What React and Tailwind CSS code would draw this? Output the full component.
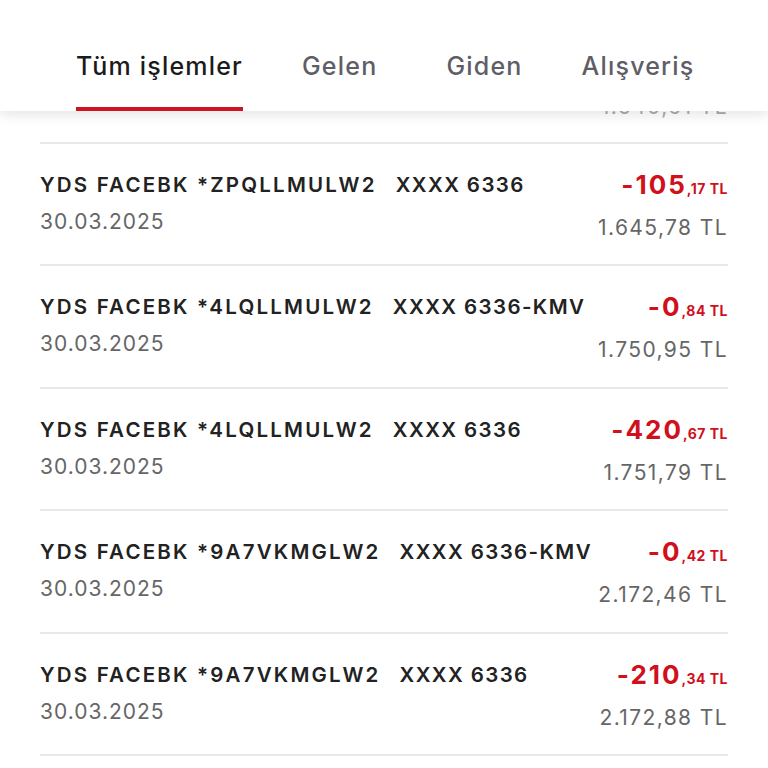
// App.jsx — Hesap hareketleri listesi

const TABS = ['Tüm işlemler', 'Gelen', 'Giden', 'Alışveriş']

const ROWS = [
  { ref: '*ZPQLLMULW2', card: 'XXXX 6336',     whole: '-105', cents: ',17', balance: '1.645,78 TL' },
  { ref: '*4LQLLMULW2', card: 'XXXX 6336-KMV', whole: '-0',   cents: ',84', balance: '1.750,95 TL' },
  { ref: '*4LQLLMULW2', card: 'XXXX 6336',     whole: '-420', cents: ',67', balance: '1.751,79 TL' },
  { ref: '*9A7VKMGLW2', card: 'XXXX 6336-KMV', whole: '-0',   cents: ',42', balance: '2.172,46 TL' },
  { ref: '*9A7VKMGLW2', card: 'XXXX 6336',     whole: '-210', cents: ',34', balance: '2.172,88 TL' },
]

function Row({ r }) {
  return (
    <div className="h-[122.4px] flex items-start justify-between border-t-2 border-[#e8e8e8] pt-[26px]">
      <div className="flex flex-col">
        <div className="flex gap-[19px] text-[20.5px] leading-[30px] font-semibold text-[#222]">
          <span className="tracking-[2.2px]">YDS FACEBK {r.ref}</span>
          <span className="tracking-[1.4px]">{r.card}</span>
        </div>
        <div className="text-[21px] leading-[30px] mt-[7px] tracking-[1px] text-[#666]">30.03.2025</div>
      </div>
      <div className="flex flex-col items-end">
        <div className="leading-[30px] font-bold text-[#d0101c]">
          <span className="text-[26px] tracking-[2px]">{r.whole}</span>
          <span className="text-[14px] tracking-[0.5px]">{r.cents} TL</span>
        </div>
        <div className="text-[21px] leading-[30px] mt-[9px] tracking-[1.4px] text-[#666]">{r.balance}</div>
      </div>
    </div>
  )
}

export default function App() {
  return (
    <div className="w-[768px] h-[768px] overflow-hidden bg-white font-['Inter',sans-serif]">
      {/* ── Sekmeler ─────────────────────────── */}
      <div className="relative z-10 h-[111px] bg-white shadow-[0_4px_12px_rgba(0,0,0,0.10)] flex items-end pl-[76px]">
        {TABS.map((t, i) => (
          <div key={t} className={`flex flex-col ${i === 1 ? 'mr-[69px]' : 'mr-[59px]'}`}>
            <span className={`text-[25px] leading-[30px] font-medium tracking-[1.2px] ${i === 0 ? 'text-[#1b1b1b]' : 'text-[#5e5e66]'}`}>
              {t}
            </span>
            <span className={`mt-[26px] h-[4px] ${i === 0 ? 'bg-[#cc1422]' : 'bg-transparent'}`} />
          </div>
        ))}
      </div>

      {/* ── Liste ────────────────────────────── */}
      <div className="px-[40px]">
        <div className="h-[31px] overflow-hidden flex flex-col justify-end items-end">
          <div className="text-[21px] leading-[30px] tracking-[1.4px] text-[#aaa] shrink-0 mb-[20px]">1.540,61 TL</div>
        </div>
        {ROWS.map((r, i) => <Row key={i} r={r} />)}
        <div className="border-t-2 border-[#e8e8e8]" />
      </div>
    </div>
  )
}
